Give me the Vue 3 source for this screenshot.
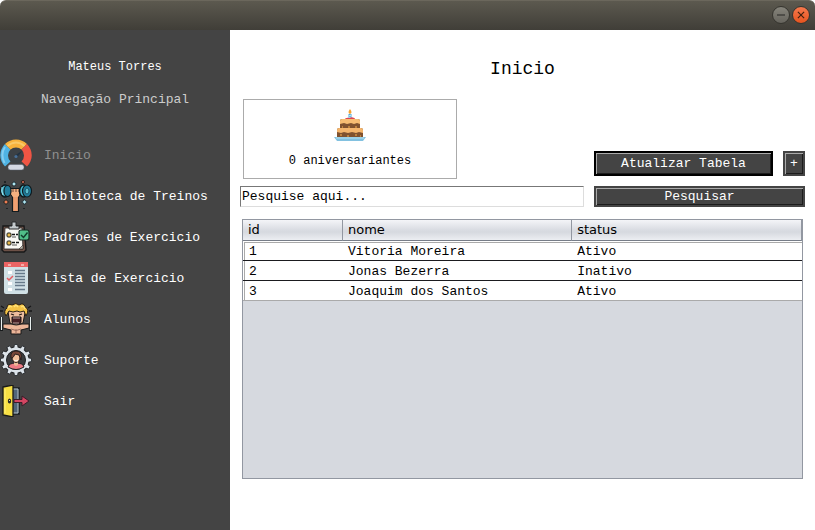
<script setup>
import { ref } from 'vue'

const search = ref('Pesquise aqui...')
const items = [
  { id: 'home', label: 'Inicio', active: true },
  { id: 'library', label: 'Biblioteca de Treinos' },
  { id: 'patterns', label: 'Padroes de Exercicio' },
  { id: 'list', label: 'Lista de Exercicio' },
  { id: 'students', label: 'Alunos' },
  { id: 'support', label: 'Suporte' },
  { id: 'exit', label: 'Sair' }
]
const rows = [
  { id: 1, nome: 'Vitoria Moreira', status: 'Ativo' },
  { id: 2, nome: 'Jonas Bezerra', status: 'Inativo' },
  { id: 3, nome: 'Joaquim dos Santos', status: 'Ativo' }
]
const teeth = Array.from({ length: 12 }, (_, i) => i * 30)
</script>

<template>
  <div class="window">
    <header class="titlebar">
      <button class="control" type="button" aria-label="Minimizar">
        <svg viewBox="0 0 18 18"><path d="M4.500 9h9" /></svg>
      </button>
      <button class="control close" type="button" aria-label="Fechar">
        <svg viewBox="0 0 18 18"><path d="M5.500 5.500l7 7M12.500 5.500l-7 7" /></svg>
      </button>
    </header>

    <div class="body">
      <aside class="sidebar">
        <p class="user">Mateus Torres</p>
        <p class="section">Navegação Principal</p>
        <nav>
          <a v-for="item in items" :key="item.id" href="#" class="link" :class="{ active: item.active }">
            <svg v-if="item.id === 'home'" class="icon" viewBox="0 0 32 32">
              <path d="M5 27.500A15.700 15.700 0 0 1 5 5L11 11A7.500 7.500 0 0 0 11 22Z" fill="#4fb3e3" />
              <path d="M5 5A15.700 15.700 0 0 1 27 5L21 11A7.500 7.500 0 0 0 11 11Z" fill="#f7b23c" />
              <path d="M27 5A15.700 15.700 0 0 1 27 27.500L21 22A7.500 7.500 0 0 0 21 11Z" fill="#ef5544" />
              <path d="M7.500 7Q16 0 24.500 7" fill="none" stroke="#f9c968" stroke-width="2" />
              <path d="M5 8Q0 15 4.500 24" fill="none" stroke="#85cdf0" stroke-width="2" />
              <circle cx="16" cy="16.500" r="8" fill="#3c4145" />
              <path d="M15 16.500L22.500 11.500L17 18.500Z" fill="#223243" />
              <circle cx="16" cy="17.500" r="1.600" fill="#476f98" />
              <rect x="8" y="25.500" width="16" height="5.500" rx="2.500" fill="#d5d8e3" stroke="#555c6a" stroke-width=".5" />
            </svg>

            <svg v-else-if="item.id === 'library'" class="icon" viewBox="0 0 32 32">
              <path d="M12.500 31.500V17L10 13V9H20V14L18.500 17V31.500Z" fill="#efa071" stroke="#121c20" stroke-width="1.200" />
              <path d="M8 10H24" stroke="#11191d" stroke-width="4" />
              <path d="M8 10H24" stroke="#c7dce0" stroke-width="1.500" />
              <path d="M11 9h9v5l-2 3h-5l-2-3Z" fill="#f4b080" />
              <path d="M13 9v3M16 9v3M19 9v3" stroke="#69483b" />
              <ellipse cx="5" cy="11" rx="4.500" ry="6" fill="#48b9cf" stroke="#10191d" stroke-width="1.500" />
              <ellipse cx="7.500" cy="11" rx="3.500" ry="5.500" fill="#207c9b" stroke="#10191d" stroke-width="1.200" />
              <ellipse cx="23.500" cy="11" rx="4" ry="6" fill="#48b9cf" stroke="#10191d" stroke-width="1.500" />
              <ellipse cx="27" cy="11" rx="4.500" ry="6" fill="#207c9b" stroke="#10191d" stroke-width="1.200" />
              <ellipse cx="27" cy="11" rx="2" ry="3" fill="#57bccd" stroke="#185166" />
              <path d="M2 7q-1 4 1 8" fill="none" stroke="#a1e2ed" />
              <path d="M14 1l1 2 2 1-2 1-1 2-1-2-2-1 2-1ZM24.500 19l1 2 2 1-2 1-1 2-1-2-2-1 2-1Z" fill="#afe6f0" stroke="#14232b" stroke-width=".7" />
              <path d="M6 19l1 2 2 1-2 1-1 2-1-2-2-1 2-1Z" fill="#ee7d52" stroke="#18201f" stroke-width=".7" />
              <circle cx="23" cy="2" r="1.500" fill="#e4765d" stroke="#231c1b" />
              <path d="M4 2h2M24 28v1M7 28v1" stroke="#151b1d" stroke-width="1.500" />
            </svg>

            <svg v-else-if="item.id === 'patterns'" class="icon" viewBox="0 0 32 32">
              <path d="M3 5H24L26 29L24 31H4L2 29Z" fill="#6d5147" stroke="#171819" stroke-width="1.400" />
              <path d="M5 7H22L23 28H4Z" fill="#faf9f5" stroke="#272423" stroke-width=".8" />
              <path d="M19 28l4-4v4Z" fill="#b8b4aa" stroke="#302d2a" stroke-width=".6" />
              <path d="M9 5h3V1h4v4h3v3H9Z" fill="#c3c9cc" stroke="#26282a" />
              <path d="M12 13.500h6M12 21.500h8" stroke="#161819" stroke-width="1.600" stroke-dasharray="3 1" />
              <path d="M12 16h4M12 24h5" stroke="#555" />
              <rect x="7" y="12" width="4" height="4" rx="1" fill="#e9ba4c" stroke="#1e2222" />
              <rect x="7" y="20" width="4" height="4" rx="1" fill="#e9ba4c" stroke="#1e2222" />
              <rect x="19" y="9" width="10" height="10" rx="2" fill="#50be89" stroke="#172c25" stroke-width="1.200" />
              <path d="M21 14l2.500 2.500 4-5" fill="none" stroke="#123c2d" stroke-width="1.500" />
            </svg>

            <svg v-else-if="item.id === 'list'" class="icon" viewBox="0 0 32 32">
              <path d="M4 1h24v29a2 2 0 0 1-2 2H6a2 2 0 0 1-2-2Z" fill="#d1e1e6" />
              <path d="M4 0h24v5H4Z" fill="#eb6464" />
              <path d="M8 3h3M21 3h3" stroke="#f7c4bd" stroke-width="1.500" />
              <path d="M8 9h4v3H8ZM8 20h4v3H8ZM8 26h4v3H8Z" fill="#fff" />
              <path d="M7 16l2 2 4-4" fill="none" stroke="#e65e63" stroke-width="1.500" />
              <path d="M15 8.500h10M15 11.500h10M15 14.500h10M15 17.500h10M15 20.500h10M15 23.500h10M15 27.500h10" stroke="#667a8a" stroke-width="1.300" />
            </svg>

            <svg v-else-if="item.id === 'students'" class="icon" viewBox="0 0 32 32">
              <path d="M1.500 14v14M30.500 14v14" stroke="#171a1b" stroke-width="3" />
              <path d="M1.500 14v13M30.500 14v13" stroke="#e8eeee" stroke-width="1.200" />
              <path d="M3 21h26v4l-8 2v4H11v-4l-8-2Z" fill="#ecb699" stroke="#191919" />
              <path d="M11 26q5 3 10 0M16 26v5" fill="none" stroke="#9b6c5d" />
              <path d="M8 9q0-4 5-5h7q5 1 5 6l-2 10q-7 4-13 0Z" fill="#edbd9e" stroke="#191717" />
              <path d="M6 13Q3 8 7 5Q7 0 12 2Q16-1 19 2Q24-1 25 4Q30 6 26 13L24 8L20 9L17 8L13 9L9 8Z" fill="#f4c246" stroke="#292017" />
              <path d="M8 5q2-3 4-1M14 4q2-3 4 0M21 4q3-2 4 2" fill="none" stroke="#ffe276" stroke-width="1.500" />
              <path d="M11 11l3 1M22 11l-3 1" stroke="#211918" stroke-width="1.300" />
              <path d="M12 14h9v5l-1 2h-7l-1-2Z" fill="#471f24" stroke="#1d1718" />
              <path d="M13 15h7M13 20h6" stroke="#e9d5cb" stroke-width=".7" />
              <path d="M1 3l3 2M0 8h3M31 3l-3 2M32 8h-3" stroke="#171719" stroke-width="1.300" />
            </svg>

            <svg v-else-if="item.id === 'support'" class="icon" viewBox="0 0 32 32">
              <circle cx="16" cy="16" r="13.500" fill="#202326" />
              <g stroke="#202326" stroke-width=".8">
                <path v-for="angle in teeth" :key="angle" d="M13.500 5.500L14.500 .5H17.500L18.500 5.500Z" fill="#dce3e9" :transform="`rotate(${angle} 16 16)`" />
              </g>
              <circle cx="16" cy="16" r="11" fill="#353638" stroke="#dce3e9" stroke-width="3" />
              <circle cx="16" cy="16" r="9.500" fill="#393a3c" stroke="#202326" />
              <path d="M8 23q1-4 8-4t8 4q-8 5-16 0Z" fill="#ee7b84" stroke="#202022" />
              <path d="M14 17h4v4l-2 1-2-1Z" fill="#edb994" />
              <ellipse cx="16" cy="13.500" rx="4" ry="5" fill="#f3c19d" stroke="#26201f" />
              <path d="M11 14q-1-7 5-7 7 0 5 9l-2-5-4-1q-1 3-3 4Z" fill="#774638" stroke="#2a201f" />
              <path d="M14 16q2 2 4 0" fill="none" stroke="#fff" />
            </svg>

            <svg v-else class="icon" viewBox="0 0 32 32">
              <path d="M12 3h7v26h-7Z" fill="#506579" stroke="#171d22" stroke-width="1.500" />
              <path d="M13 4h5v24h-5" fill="none" stroke="#b4c1ca" />
              <path d="M3 2l10-2v32L3 30Z" fill="#f7df43" stroke="#191a18" stroke-width="1.300" />
              <path d="M5 4v24" stroke="#ffef79" />
              <ellipse cx="9.500" cy="16" rx="1.700" ry="2.500" fill="#292a29" />
              <path d="M9.500 15v1" stroke="#dedb92" />
              <path d="M14 14.500h8V11l7 5-7 5v-3.500h-8Z" fill="#d34662" stroke="#391d29" />
            </svg>
            <span>{{ item.label }}</span>
          </a>
        </nav>
      </aside>

      <main class="main">
        <h1>Inicio</h1>
        <div class="tools">
          <section class="card">
            <svg class="cake" viewBox="0 0 32 34">
              <path d="M16 0q3 4 0 5q-3-1 0-5" fill="#f6a32f" />
              <path d="M14.500 5h3v5h-3Z" fill="#4ea9d9" />
              <path d="M15 7l2-1M15 9l2-1" stroke="#d8f3ff" />
              <path d="M10 11q2-3 5-2 5-2 7 2Z" fill="#dc4552" />
              <path d="M6 12q0-2 2-2h16q2 0 2 2v8H6Z" fill="#80522f" />
              <path d="M6 12q0-2 2-2h16q2 0 2 2v3l-3-1-3 1-3-1-4 1-3-1-4 1Z" fill="#f7bd73" />
              <path d="M3 21q0-2 2-2h22q2 0 2 2v8H3Z" fill="#80522f" />
              <path d="M3 21q0-2 2-2h22q2 0 2 2v3l-4-1-3 1-4-1-4 1-4-1-3 1-4-1Z" fill="#f4b56c" />
              <path d="M8 18h1M14 18h2M21 18h2M6 26h2M13 27h2M21 26h2M26 27h1" stroke="#cf9144" stroke-width="1.500" />
              <path d="M0 28h32l-3 4H3Z" fill="#82c1e0" />
              <path d="M2 29h28" stroke="#b7e1ef" />
            </svg>
            <p>0 aniversariantes</p>
          </section>
          <div class="actions">
            <button type="button" class="button refresh">Atualizar Tabela</button>
            <button type="button" class="button add" aria-label="Adicionar">+</button>
          </div>
          <input v-model="search" class="search" type="text" aria-label="Pesquise aqui">
          <button type="button" class="button submit">Pesquisar</button>
        </div>

        <div class="panel">
          <table>
            <thead>
              <tr><th scope="col">id</th><th scope="col">nome</th><th scope="col">status</th></tr>
            </thead>
            <tbody>
              <tr v-for="row in rows" :key="row.id">
                <td>{{ row.id }}</td><td>{{ row.nome }}</td><td>{{ row.status }}</td>
              </tr>
            </tbody>
          </table>
        </div>
      </main>
    </div>
  </div>
</template>

<style>
body { margin: 0; background: #fff; }
</style>

<style scoped>
* { box-sizing: border-box; }
.window {
  min-height: 100vh;
  display: flex;
  flex-direction: column;
  font: 13px/16px "Liberation Mono", monospace;
  color: #000;
}
.titlebar {
  height: 30px;
  display: flex;
  align-items: center;
  justify-content: flex-end;
  gap: 2px;
  padding: 0 5px 2px 0;
  border-radius: 6px 6px 0 0;
  background: linear-gradient(#5c594f, #403e38);
  border-top: 1px solid #6b675c;
}
.control {
  width: 18px;
  height: 18px;
  padding: 0;
  border: 1px solid #36352f;
  border-radius: 50%;
  background: linear-gradient(#86847b, #66645d);
  color: #32312d;
}
.control svg { display: block; width: 16px; height: 16px; }
.control path { fill: none; stroke: currentColor; stroke-width: 1.3; }
.close { background: linear-gradient(#f6794d, #e6541f); color: #40200f; }
.body { flex: 1; display: flex; }
.sidebar { flex: 0 0 230px; background: #444; color: #fff; }
.sidebar p { margin: 0; text-align: center; }
.sidebar .user { padding-top: 29px; font-size: 12px; }
.sidebar .section { padding: 17px 0 26px; color: #ccc; }
.link {
  display: flex;
  align-items: center;
  gap: 12px;
  height: 41px;
  color: #fff;
  text-decoration: none;
}
.link span { padding-top: 2px; }
.link.active { color: #909090; }
.icon { flex: none; width: 32px; height: 32px; }
.main {
  flex: 1;
  min-width: 0;
  display: flex;
  flex-direction: column;
  padding: 28px 10px 51px;
}
h1 {
  margin: 0 0 19px;
  font-size: 18px;
  line-height: 22px;
  font-weight: 400;
  text-align: center;
}
.tools {
  display: grid;
  grid-template-columns: minmax(0, 1fr) 211px;
  gap: 7px 10px;
  align-items: end;
}
.card {
  width: 214px;
  height: 80px;
  margin-left: 3px;
  border: 1px solid #ababab;
  text-align: center;
  font-size: 12px;
}
.cake { display: block; width: 32px; height: 34px; margin: 9px auto 0; }
.card p { margin: 10px 0 0; }
.actions { display: flex; gap: 10px; padding-bottom: 3px; }
.button {
  height: 25px;
  padding: 0;
  border: 2px solid #444;
  border-radius: 0;
  background: #444;
  box-shadow: inset 1px 1px #aaa, inset -1px -1px #1c1c1c;
  color: #fff;
  font: inherit;
}
.refresh { flex: 1; border-color: #000; }
.add { width: 22px; }
.submit { height: 21px; }
.search {
  width: 100%;
  height: 21px;
  padding: 0 0 0 1px;
  border: 1px solid #ddd;
  border-top: 1px solid #777;
  border-left: 1px solid #777;
  border-radius: 0;
  outline: 0;
  background: #fff;
  color: #000;
  font: inherit;
}
.panel {
  flex: 1;
  margin: 12px 2px 0;
  border: 1px solid #9297a1;
  background: #d6d9df;
}
table { width: 100%; table-layout: fixed; border-collapse: separate; border-spacing: 0; }
th {
  height: 21px;
  padding: 0 5px;
  border-right: 1px solid #9297a1;
  border-bottom: 1px solid #777d88;
  background: linear-gradient(#f4f5f8, #d9dce2 50%, #d6d9df 60%, #eceef2);
  font: 13px/16px "DejaVu Sans", sans-serif;
  text-align: left;
}
th:first-child { width: 100px; }
th:nth-child(2) { width: 41%; }
td { height: 20px; padding: 2px 5px 0; border-bottom: 1px solid #1b1b1f; background: #fff; }
td:first-child { padding-left: 6px; box-shadow: inset 1px 0 #fff, inset 2px 0 #aaa; }
tbody tr:first-child td { box-shadow: inset 0 1px #fff, inset 0 2px #aaa; }
tbody tr:first-child td:first-child { box-shadow: inset 1px 1px #fff, inset 2px 2px #aaa; }
tbody tr:last-child td { border-bottom-color: #aaa; }
</style>
